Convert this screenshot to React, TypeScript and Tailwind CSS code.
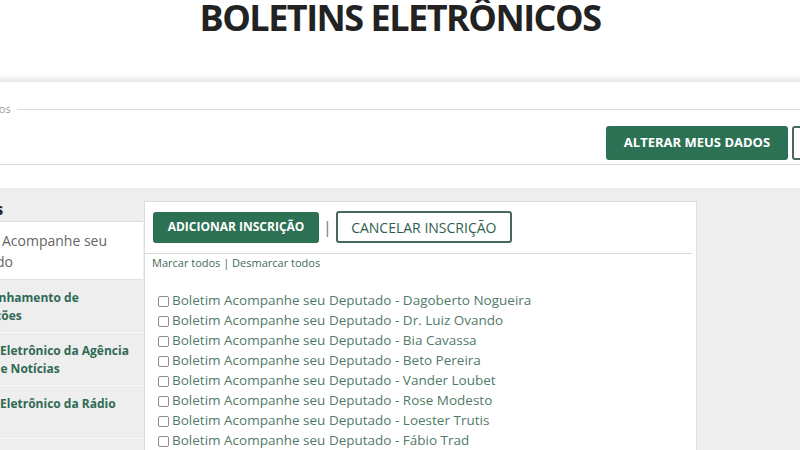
import React from "react";

const deputados = [
  "Dagoberto Nogueira",
  "Dr. Luiz Ovando",
  "Bia Cavassa",
  "Beto Pereira",
  "Vander Loubet",
  "Rose Modesto",
  "Loester Trutis",
  "Fábio Trad",
];

const sideItems = [
  "Acompanhamento de Proposições",
  "Boletim Eletrônico da Agência ALEMS de Notícias",
  "Boletim Eletrônico da Rádio ALEMS",
  "Boletim Eletrônico da TV ALEMS",
];

export default function App() {
  return (
    <div className="w-[800px] h-[450px] overflow-hidden bg-[#eeeeee] font-['Open_Sans',sans-serif]">
      {/* title */}
      <div className="bg-white h-[75px] flex justify-center">
        <h1 className="text-[36px] leading-[36px] font-bold text-[#222] [font-stretch:90%] tracking-[-1.5px]">
          BOLETINS ELETRÔNICOS
        </h1>
      </div>
      <div className="h-[7px] bg-gradient-to-b from-white to-[#e4e4e4]" />

      {/* dados */}
      <div className="bg-white h-[106px] pt-[21px]">
        <div className="flex items-center h-[12px]">
          <span className="text-[11px] leading-[12px] text-[#9a9a9a] -ml-[22px]">Dados</span>
          <div className="flex-1 ml-[6px] border-t border-[#dcdcdc]" />
        </div>
        <div className="flex justify-end mt-[11px] h-[34px]">
          <button className="w-[182px] h-[34px] bg-[#2d7155] text-white text-[13px] font-bold rounded-[3px] shrink-0">
            ALTERAR MEUS DADOS
          </button>
          <div className="w-[120px] h-[34px] ml-[4px] -mr-[112px] border-2 border-[#46695c] rounded-[3px] shrink-0" />
        </div>
        <div className="mt-[4px] border-t border-[#dcdcdc]" />
      </div>

      {/* body */}
      <div className="flex items-start">
        <div className="w-[143px] shrink-0 overflow-hidden">
          <div className="w-[203px] -ml-[60px]">
            <div className="pt-[10px] pb-[1px] border-b border-[#dcdcdc] text-[16px] leading-[22px] font-bold text-[#222]">
              <div className="-ml-[2px]">Boletins</div>
            </div>
            <div className="bg-white pl-[8px] pr-[8px] pt-[8px] pb-[7px] border-b border-[#e2e2e2] text-[14px] leading-[21px] text-[#666]">
              Boletim Acompanhe seu Deputado
            </div>
            {sideItems.map((t) => (
              <div
                key={t}
                className="pl-[10px] pr-[8px] pt-[9px] pb-[7px] border-b border-[#f9f9f9] text-[12px] leading-[18px] font-bold text-[#2f6a54]"
              >
                {t}
              </div>
            ))}
          </div>
        </div>

        <div className="ml-[1px] mt-[13px] w-[553px] h-[260px] bg-white border border-[#dddddd]">
          <div className="mr-[4px] border-b border-[#d8d8d8] pl-[8px] pt-[9px] pb-[10px] flex items-center">
            <button className="w-[166px] h-[31px] bg-[#2d7155] text-white text-[12px] font-bold rounded-[3px]">
              ADICIONAR INSCRIÇÃO
            </button>
            <span className="mx-[4px] text-[16px] leading-[16px] text-[#777]">|</span>
            <button className="w-[176px] h-[32px] border-2 border-[#46695c] text-[#2f5d4b] text-[14px] rounded-[3px]">
              CANCELAR INSCRIÇÃO
            </button>
          </div>
          <div className="pl-[7px] pt-[2px] text-[11px] leading-[14px] text-[#3e6b59]">
            Marcar todos | Desmarcar todos
          </div>
          <ul className="pl-[13px] pt-[20px]">
            {deputados.map((d) => (
              <li key={d} className="flex items-center h-[20px] text-[13.5px] text-[#527a69]">
                <span className="w-[11px] h-[11px] mt-[3px] border border-[#8d8d8d] rounded-[2px] bg-white shrink-0" />
                <span className="ml-[3px]">Boletim Acompanhe seu Deputado - {d}</span>
              </li>
            ))}
          </ul>
        </div>
      </div>
    </div>
  );
}
